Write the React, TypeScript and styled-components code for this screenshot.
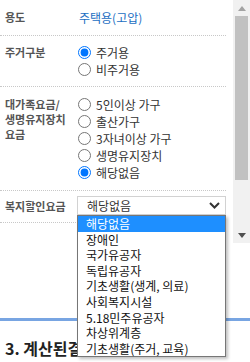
import React from 'react'
import styled, { createGlobalStyle } from 'styled-components'

const GlobalStyle = createGlobalStyle`
  html, body {
    margin: 0;
    padding: 0;
    background: #fff;
  }
  body {
    font-family: "Noto Sans CJK KR", "Noto Sans", sans-serif;
    color: #333;
  }
`

const Page = styled.div`
  position: relative;
  width: 250px;
  height: 362px;
  overflow: hidden;
  background: #fff;
`

const Panel = styled.div`
  display: flex;
  height: 243px;
`

const FormArea = styled.div`
  flex: 1;
  overflow: hidden;
  padding-right: 7px;
`

const Row = styled.div<{ $pad: string }>`
  display: grid;
  grid-template-columns: 77px 1fr;
  padding: ${p => p.$pad};
  border-bottom: 1px dotted #c8c8c8;
`

const Label = styled.div<{ $top?: number }>`
  padding: ${p => p.$top ?? 1}px 0 0 5px;
  font-size: 11px;
  line-height: 15px;
  font-weight: 700;
  color: #555;
`

const Value = styled.div<{ $link?: boolean }>`
  padding-left: 2px;
  font-size: 12px;
  line-height: 17px;
  color: ${p => (p.$link ? '#1b6ec2' : '#333')};
`

const RadioList = styled.div`
  display: flex;
  flex-direction: column;
`

const RadioItem = styled.label`
  display: flex;
  align-items: center;
  height: 17px;
  font-size: 12px;
  line-height: 17px;
  color: #333;
  white-space: nowrap;

  input {
    width: 13px;
    height: 13px;
    margin: 0 5px 0 1px;
  }
`

const SelectBox = styled.div`
  box-sizing: border-box;
  display: flex;
  align-items: center;
  justify-content: space-between;
  height: 19px;
  padding: 0 5px 0 9px;
  border: 1px solid #d2d2d2;
  background: #fff;
  font-size: 12px;
  color: #333;
`

const ScrollBar = styled.div`
  display: flex;
  flex-direction: column;
  width: 17px;
  background: #f1f1f1;
`

const ScrollButton = styled.div`
  display: flex;
  align-items: center;
  justify-content: center;
  height: 16px;
`

const Track = styled.div`
  flex: 1;
  padding: 0 2px;
`

const Thumb = styled.div`
  height: 164px;
  background: #c1c1c1;
`

const ResultSection = styled.section`
  margin-top: 75px;
  border-top: 3px solid #78a5e2;
  padding: 17px 0 0 5px;
`

const Heading = styled.h3`
  margin: 0;
  font-size: 16px;
  line-height: 20px;
  font-weight: 700;
  color: #222;
`

const Dropdown = styled.ul`
  position: absolute;
  top: 215px;
  left: 77px;
  box-sizing: border-box;
  width: 149px;
  margin: 0;
  padding: 0;
  list-style: none;
  background: #fff;
  border: 1px solid #767676;
  box-shadow: 2px 2px 3px rgba(0, 0, 0, 0.25);
`

const Option = styled.li<{ $active?: boolean }>`
  height: 15.6px;
  padding-left: 8px;
  font-size: 12px;
  line-height: 15.6px;
  white-space: nowrap;
  color: ${p => (p.$active ? '#fff' : '#111')};
  background: ${p => (p.$active ? '#1e8fff' : 'transparent')};
`

const Arrow = ({ up, color }: { up?: boolean; color: string }) => (
  <svg width="8" height="5" viewBox="0 0 8 5">
    <path d={up ? 'M0 5 L4 0 L8 5 Z' : 'M0 0 L4 5 L8 0 Z'} fill={color} />
  </svg>
)

const Chevron = () => (
  <svg width="11" height="7" viewBox="0 0 11 7">
    <path d="M1 1 L5.5 5.5 L10 1" fill="none" stroke="#333" strokeWidth="2" />
  </svg>
)

const Radio = ({ label, checked, name }: { label: string; checked?: boolean; name: string }) => (
  <RadioItem>
    <input type="radio" name={name} defaultChecked={checked} />
    {label}
  </RadioItem>
)

const familyOptions = ['5인이상 가구', '출산가구', '3자녀이상 가구', '생명유지장치', '해당없음']

const welfareOptions = [
  '해당없음',
  '장애인',
  '국가유공자',
  '독립유공자',
  '기초생활(생계, 의료)',
  '사회복지시설',
  '5.18민주유공자',
  '차상위계층',
  '기초생활(주거, 교육)',
]

export default function App() {
  return (
    <Page>
      <GlobalStyle />
      <Panel>
        <FormArea>
          <Row $pad="9px 0">
            <Label>용도</Label>
            <Value $link>주택용(고압)</Value>
          </Row>
          <Row $pad="8px 0">
            <Label>주거구분</Label>
            <RadioList>
              <Radio name="house" label="주거용" checked />
              <Radio name="house" label="비주거용" />
            </RadioList>
          </Row>
          <Row $pad="9px 0">
            <Label>
              대가족요금/
              <br />
              생명유지장치
              <br />
              요금
            </Label>
            <RadioList>
              {familyOptions.map(o => (
                <Radio key={o} name="family" label={o} checked={o === '해당없음'} />
              ))}
            </RadioList>
          </Row>
          <Row $pad="5px 0 7px">
            <Label $top={3}>복지할인요금</Label>
            <SelectBox>
              해당없음
              <Chevron />
            </SelectBox>
          </Row>
        </FormArea>
        <ScrollBar>
          <ScrollButton>
            <Arrow up color="#a3a3a3" />
          </ScrollButton>
          <Track>
            <Thumb />
          </Track>
          <ScrollButton>
            <Arrow color="#505050" />
          </ScrollButton>
        </ScrollBar>
      </Panel>
      <ResultSection>
        <Heading>3. 계산된결과</Heading>
      </ResultSection>
      <Dropdown>
        {welfareOptions.map((o, i) => (
          <Option key={o} $active={i === 0}>
            {o}
          </Option>
        ))}
      </Dropdown>
    </Page>
  )
}
